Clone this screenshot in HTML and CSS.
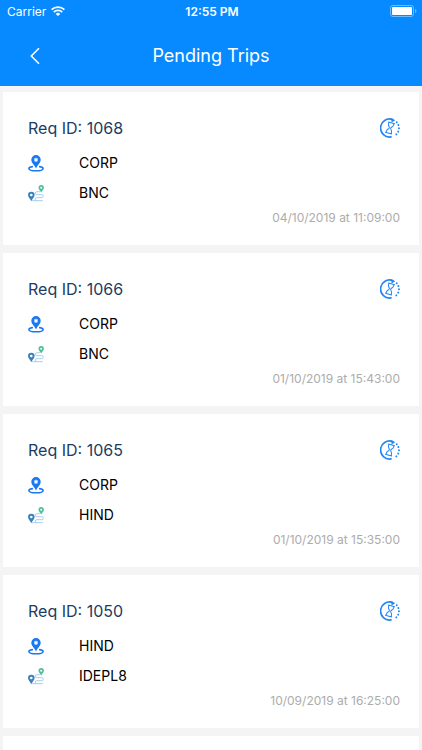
FILE: index.html
```html
<!DOCTYPE html>
<html lang="en">
<head>
<meta charset="utf-8">
<meta name="viewport" content="width=device-width, initial-scale=1">
<title>Pending Trips</title>
<link rel="stylesheet" href="styles.css">
</head>
<body>
<svg class="sprite" aria-hidden="true">
  <symbol id="pending" viewBox="0 0 20 20">
    <g fill="none" stroke="#2385f5" stroke-linecap="round" stroke-linejoin="round">
      <path d="M11 18.900A9 9 0 1 1 12.500 1.500" stroke-width="1.700"/>
      <path d="M11.400.5 14.800 2.300 12 4z" fill="#2385f5" stroke-width=".5"/>
      <path d="M16.700 4.200A8.800 8.800 0 0 1 14 18" stroke-width="1.900" stroke-dasharray=".1 3.200"/>
      <g transform="rotate(16 10 10)" stroke-width="1">
        <path d="M6.800 4.700h6.400M6.800 15.300h6.400M7.400 4.900v1.600c0 1.700 1.900 2.300 1.900 3.500s-1.900 1.800-1.900 3.500v1.600M12.600 4.900v1.600c0 1.700-1.900 2.300-1.900 3.500s1.900 1.800 1.900 3.500v1.600"/>
      </g>
    </g>
  </symbol>
  <symbol id="origin" viewBox="0 0 16 17">
    <path d="M4.300 11.600C2 12 .9 12.700.9 13.500c0 1.300 3.200 2.300 7.100 2.300s7.100-1 7.100-2.300c0-.8-1.100-1.500-3.400-1.900" fill="none" stroke="#1a78f0" stroke-width="1.600" stroke-linecap="round"/>
    <path fill="#1a78f0" fill-rule="evenodd" d="M8 .1a4.700 4.700 0 0 0-4.700 4.700C3.300 7.900 6.500 9.900 8 13.500c1.500-3.600 4.700-5.600 4.700-8.700A4.700 4.700 0 0 0 8 .1zM8 2.800a2 2 0 1 1 0 4 2 2 0 0 1 0-4z"/>
    <circle cx="8" cy="4.800" r="2" fill="#8fc0fa"/>
    <circle cx="8" cy="4.800" r="1.200" fill="#fff"/>
  </symbol>
  <symbol id="route" viewBox="0 0 16 17">
    <path d="M11.500 6.700H8.800a1.500 1.500 0 0 0 0 3h5a1.500 1.500 0 0 1 0 3H8.800a1.500 1.500 0 0 0 0 3h5.700M4.500 15.700h4.300" fill="none" stroke="#a9cdee" stroke-width="1" stroke-linecap="round"/>
    <path fill="#3983bd" fill-rule="evenodd" d="M3.300 6.700A3.300 3.300 0 0 0 0 10c0 2.200 2.200 3.600 3.300 6.200 1.100-2.600 3.300-4 3.300-6.200A3.300 3.300 0 0 0 3.300 6.700zM3.300 8.700a1.300 1.300 0 1 1 0 2.600 1.300 1.300 0 0 1 0-2.600z"/>
    <path fill="#4fbea0" fill-rule="evenodd" d="M13.200 0a2.700 2.700 0 0 0-2.700 2.700c0 1.700 1.700 2.800 2.700 4.800 1-2 2.700-3.100 2.700-4.800A2.700 2.700 0 0 0 13.200 0zM13.200 1.700a1 1 0 1 1 0 2 1 1 0 0 1 0-2z"/>
  </symbol>
</svg>

<header class="header">
  <div class="status">
    <div class="status-left">
      <span>Carrier</span>
      <svg class="wifi" viewBox="0 0 14 10" aria-hidden="true">
        <g fill="none" stroke="#fff" stroke-width="1.800">
          <path d="M.6 3.700a9 9 0 0 1 12.800 0"/>
          <path d="M2.800 6.200a5.900 5.900 0 0 1 8.400 0"/>
        </g>
        <path fill="#fff" d="M4.700 7.900a3.300 3.300 0 0 1 4.600 0L7 10z"/>
      </svg>
    </div>
    <span class="time">12:55 PM</span>
    <svg class="battery" viewBox="0 0 27 12" aria-hidden="true">
      <rect x=".5" y=".5" width="23" height="11" rx="2.500" fill="none" stroke="#6bbcff"/>
      <rect x="2" y="2" width="20" height="8" rx="1" fill="#fff"/>
      <path d="M25 4v4q1.500-.6 1.500-2T25 4z" fill="#6bbcff"/>
    </svg>
  </div>
  <div class="nav">
    <button class="back" type="button" aria-label="Back">
      <svg viewBox="0 0 10 18" aria-hidden="true"><path d="M9 1.300 1.300 9 9 16.700" fill="none" stroke="#fff" stroke-width="1.600"/></svg>
    </button>
    <h1 class="title">Pending Trips</h1>
  </div>
</header>

<main class="trips">
  <article class="card">
    <div class="card-head"><h2 class="req">Req ID: 1068</h2><svg class="pending" role="img" aria-label="Pending"><use href="#pending"/></svg></div>
    <div class="stops">
      <div class="stop"><svg class="pin" aria-hidden="true"><use href="#origin"/></svg><span>CORP</span></div>
      <div class="stop"><svg class="pin" aria-hidden="true"><use href="#route"/></svg><span>BNC</span></div>
    </div>
    <p class="date">04/10/2019 at 11:09:00</p>
  </article>
  <article class="card">
    <div class="card-head"><h2 class="req">Req ID: 1066</h2><svg class="pending" role="img" aria-label="Pending"><use href="#pending"/></svg></div>
    <div class="stops">
      <div class="stop"><svg class="pin" aria-hidden="true"><use href="#origin"/></svg><span>CORP</span></div>
      <div class="stop"><svg class="pin" aria-hidden="true"><use href="#route"/></svg><span>BNC</span></div>
    </div>
    <p class="date">01/10/2019 at 15:43:00</p>
  </article>
  <article class="card">
    <div class="card-head"><h2 class="req">Req ID: 1065</h2><svg class="pending" role="img" aria-label="Pending"><use href="#pending"/></svg></div>
    <div class="stops">
      <div class="stop"><svg class="pin" aria-hidden="true"><use href="#origin"/></svg><span>CORP</span></div>
      <div class="stop"><svg class="pin" aria-hidden="true"><use href="#route"/></svg><span>HIND</span></div>
    </div>
    <p class="date">01/10/2019 at 15:35:00</p>
  </article>
  <article class="card">
    <div class="card-head"><h2 class="req">Req ID: 1050</h2><svg class="pending" role="img" aria-label="Pending"><use href="#pending"/></svg></div>
    <div class="stops">
      <div class="stop"><svg class="pin" aria-hidden="true"><use href="#origin"/></svg><span>HIND</span></div>
      <div class="stop"><svg class="pin" aria-hidden="true"><use href="#route"/></svg><span>IDEPL8</span></div>
    </div>
    <p class="date">10/09/2019 at 16:25:00</p>
  </article>
  <article class="card"></article>
</main>
</body>
</html>
```
FILE: styles.css
```css
* { box-sizing: border-box; }

body {
  margin: 0;
  height: 100vh;
  display: flex;
  flex-direction: column;
  overflow: hidden;
  background: #f4f4f4;
  color: #000;
  font-family: Inter, "Liberation Sans", sans-serif;
}

h1, h2, p { margin: 0; font-weight: 400; }

svg { display: block; flex: none; }

.sprite { position: absolute; width: 0; height: 0; }

.header {
  flex: none;
  background: #078aff;
  color: #fff;
}

.status {
  display: grid;
  grid-template-columns: 1fr auto 1fr;
  align-items: center;
  height: 22px;
  padding: 0 5px 0 7px;
  font-size: 12px;
}

.status-left { display: flex; align-items: center; gap: 5px; }
.wifi { width: 14px; height: 10px; }
.time { font-weight: 600; }
.battery { width: 27px; height: 12px; justify-self: end; }

.nav {
  display: grid;
  grid-template-columns: 48px 1fr 48px;
  align-items: center;
  height: 64px;
  padding-top: 4px;
}

.back {
  display: flex;
  justify-content: flex-end;
  padding: 8px;
  border: 0;
  background: none;
}

.back svg { width: 10px; height: 18px; }

.title { font-size: 18px; line-height: 24px; text-align: center; }

.trips {
  flex: 1;
  min-height: 0;
  display: flex;
  flex-direction: column;
  gap: 8px;
  padding: 6px 3px 0;
  overflow: auto;
  scrollbar-width: none;
}

.card {
  flex: none;
  padding: 24px 19px 19px 25px;
  background: #fff;
}

.card-head { display: flex; justify-content: space-between; align-items: center; }
.req { font-size: 16px; line-height: 24px; color: #1d3c63; }
.pending { width: 20px; height: 20px; }

.stops { margin-top: 8px; font-size: 14px; line-height: 30px; }
.stop { display: flex; align-items: center; gap: 35px; }
.pin { width: 16px; height: 17px; }

.date {
  margin-top: 2px;
  font-size: 12px;
  line-height: 16px;
  text-align: right;
  color: #acacac;
}
```
